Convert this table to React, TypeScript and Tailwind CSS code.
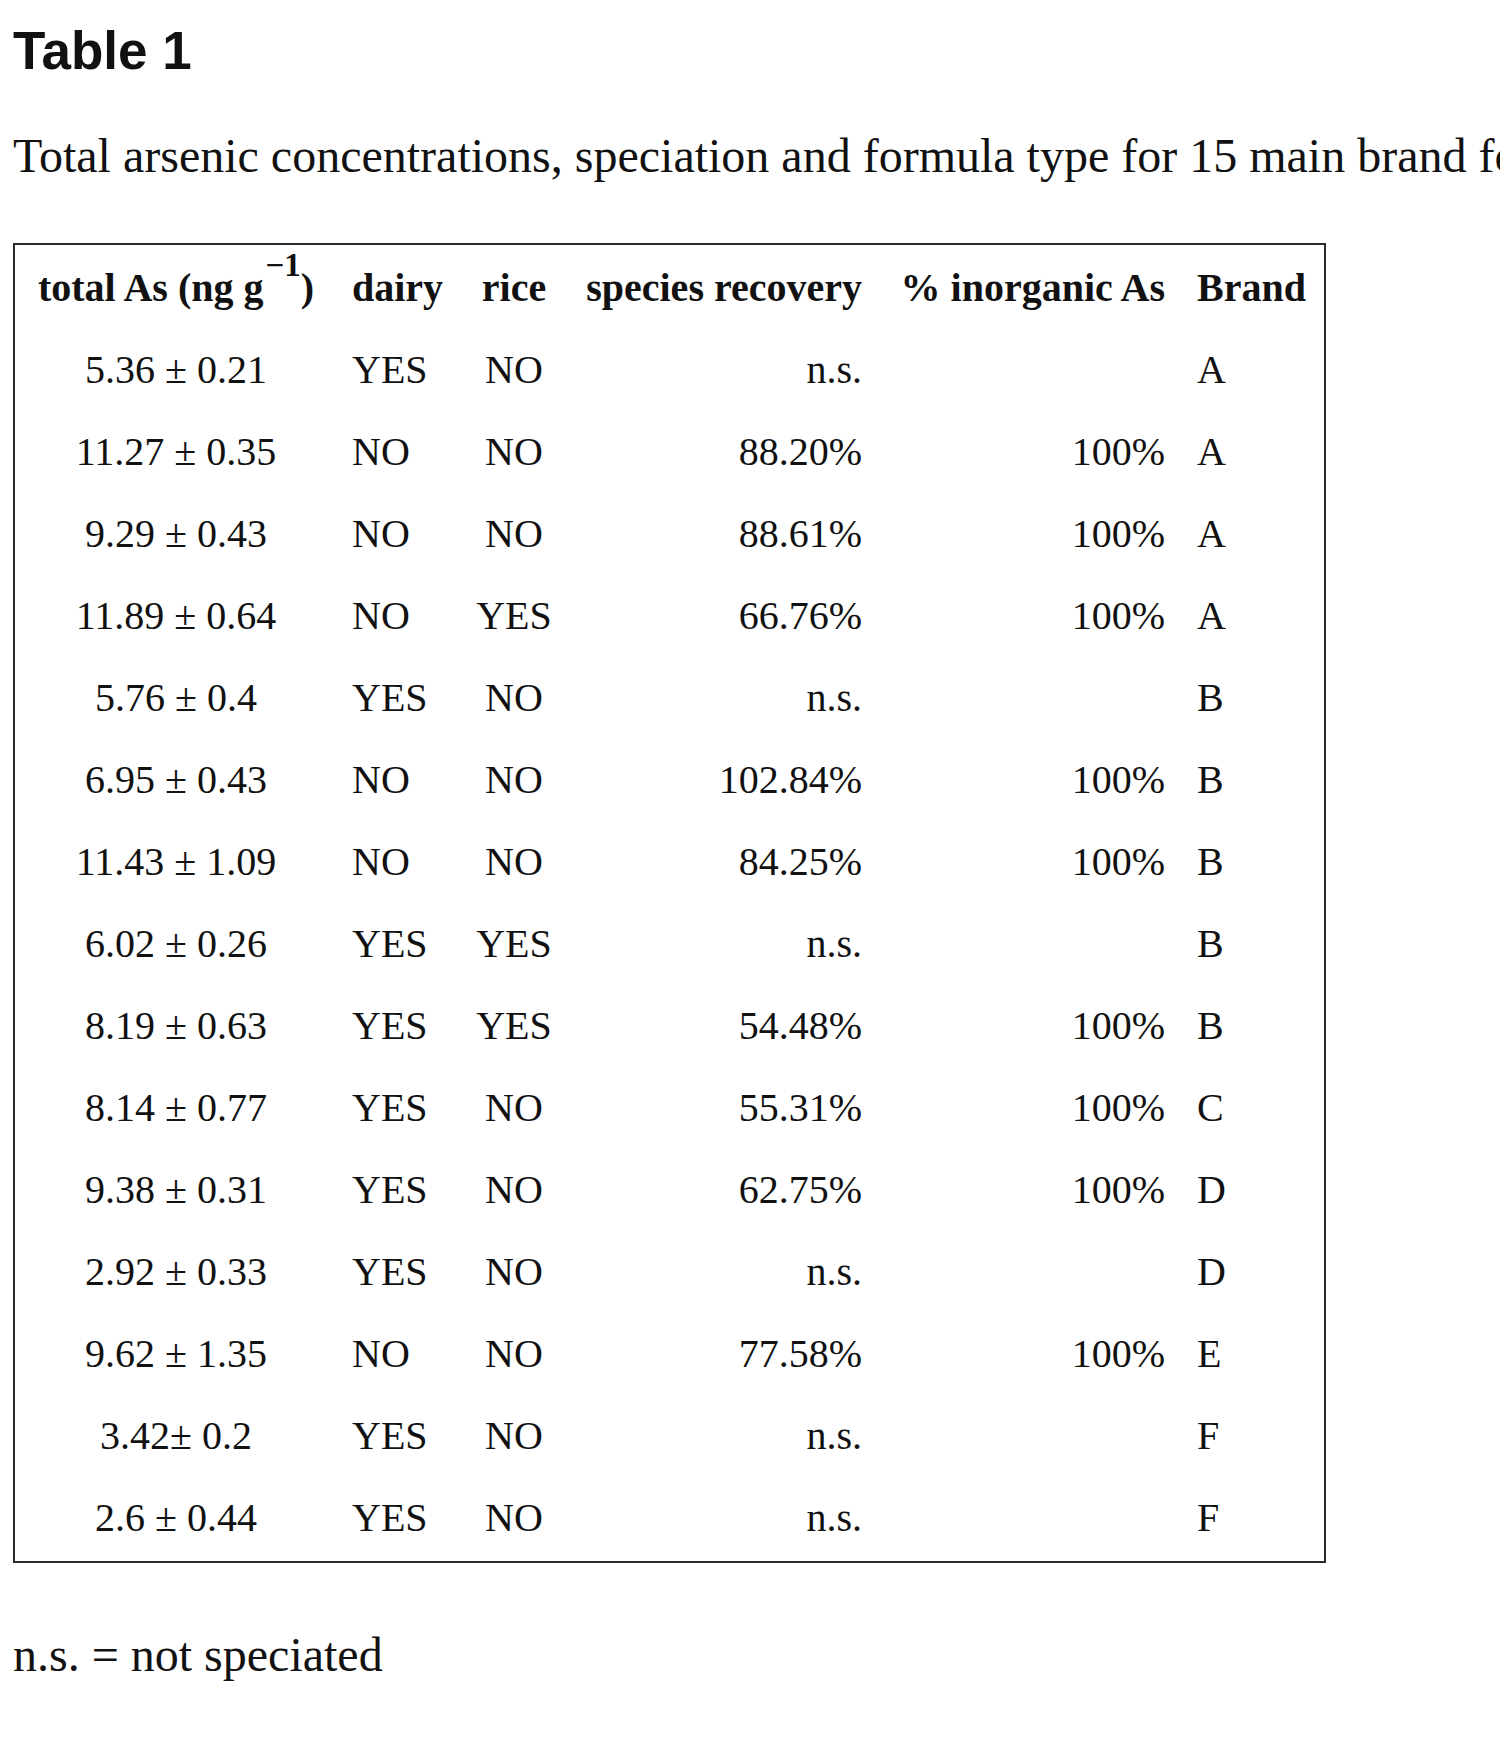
const serif = "font-['Liberation_Serif','Times_New_Roman',serif]";

type Row = [string, string, string, string, string, string];

const rows: Row[] = [
  ["5.36 ± 0.21", "YES", "NO", "n.s.", "", "A"],
  ["11.27 ± 0.35", "NO", "NO", "88.20%", "100%", "A"],
  ["9.29 ± 0.43", "NO", "NO", "88.61%", "100%", "A"],
  ["11.89 ± 0.64", "NO", "YES", "66.76%", "100%", "A"],
  ["5.76 ± 0.4", "YES", "NO", "n.s.", "", "B"],
  ["6.95 ± 0.43", "NO", "NO", "102.84%", "100%", "B"],
  ["11.43 ± 1.09", "NO", "NO", "84.25%", "100%", "B"],
  ["6.02 ± 0.26", "YES", "YES", "n.s.", "", "B"],
  ["8.19 ± 0.63", "YES", "YES", "54.48%", "100%", "B"],
  ["8.14 ± 0.77", "YES", "NO", "55.31%", "100%", "C"],
  ["9.38 ± 0.31", "YES", "NO", "62.75%", "100%", "D"],
  ["2.92 ± 0.33", "YES", "NO", "n.s.", "", "D"],
  ["9.62 ± 1.35", "NO", "NO", "77.58%", "100%", "E"],
  ["3.42± 0.2", "YES", "NO", "n.s.", "", "F"],
  ["2.6 ± 0.44", "YES", "NO", "n.s.", "", "F"],
];

// cell classes per column (width comes from the grid template)
const cellCls = [
  "text-center",
  "text-left pl-[15px]",
  "text-center",
  "text-right",
  "text-right",
  "text-left pl-[32px]",
];

export default function App() {
  return (
    <div className={`w-[1500px] h-[1737px] overflow-hidden bg-white text-[#111] ${serif}`}>
      {/* Title */}
      <h1 className="pt-[24px] pl-[13px] font-['Liberation_Sans',Arial,sans-serif] font-bold text-[53px] leading-[53px]">
        Table 1
      </h1>

      {/* Caption, runs off the right edge like the page it came from */}
      <p className="mt-[55px] pl-[13px] text-[48px] leading-[48px] whitespace-nowrap">
        Total arsenic concentrations, speciation and formula type for 15 main brand formulas
      </p>

      {/* Table */}
      <div className="mt-[63px] ml-[13px] w-[1313px] border-2 border-[#2a2a2a]">
        <div className="grid grid-cols-[322px_131px_92px_302px_303px_1fr] py-[2px] text-[40px] leading-[82px]">
          {/* header */}
          <div className={`${cellCls[0]} font-bold whitespace-nowrap`}>
            total As (ng g
            <sup className="ml-[2px] text-[33px] -top-[0.75em]">−1</sup>)
          </div>
          <div className={`${cellCls[1]} font-bold`}>dairy</div>
          <div className={`${cellCls[2]} font-bold`}>rice</div>
          <div className={`${cellCls[3]} font-bold whitespace-nowrap`}>species recovery</div>
          <div className={`${cellCls[4]} font-bold whitespace-nowrap`}>% inorganic As</div>
          <div className={`${cellCls[5]} font-bold`}>Brand</div>

          {rows.map((r, i) =>
            r.map((v, j) => (
              <div key={`${i}-${j}`} className={`${cellCls[j]} h-[82px] whitespace-nowrap`}>
                {v}
              </div>
            ))
          )}
        </div>
      </div>

      {/* Footnote */}
      <p className="mt-[68px] pl-[13px] text-[48px] leading-[48px]">n.s. = not speciated</p>
    </div>
  );
}
